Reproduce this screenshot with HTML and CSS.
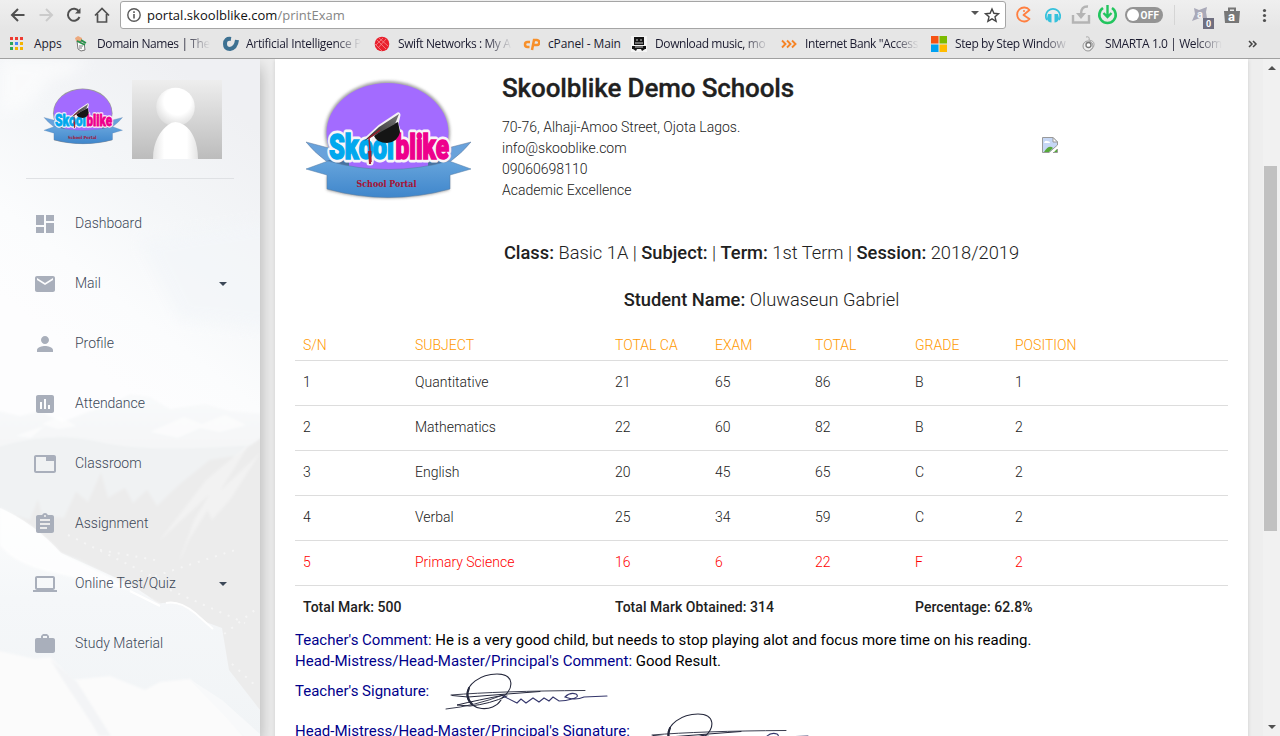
FILE: index.html
```html
<!DOCTYPE html>
<html lang="en">
<head>
<meta charset="utf-8">
<title>Skoolblike - Print Exam</title>
<link rel="stylesheet" href="styles.css">
</head>
<body>
<svg width="0" height="0" class="defs">
  <defs>
    <linearGradient id="ribbon" x1="0" y1="0" x2="0" y2="1"><stop offset="0" stop-color="#66a4dc"/><stop offset="1" stop-color="#3f86cb"/></linearGradient>
    <linearGradient id="cap" x1="0" y1="1" x2="1" y2="0"><stop offset="0" stop-color="#222"/><stop offset="1" stop-color="#777"/></linearGradient>
    <filter id="soft" x="-20%" y="-20%" width="140%" height="140%"><feGaussianBlur stdDeviation="1.6"/></filter>
    <symbol id="logo" viewBox="300 76 176 126">
      <ellipse cx="387.500" cy="133" rx="62.500" ry="52" fill="#444" opacity=".5" filter="url(#soft)"/>
      <path d="M327 176 V190 Q388 206 449 190 V176Z" fill="#333" opacity=".5" filter="url(#soft)"/>
      <ellipse cx="387.500" cy="133" rx="61" ry="50" fill="#a36bff"/>
      <path d="M306 142 L340 151 V167 L326 161 Q314 152 306 142Z M471 142 L436 151 V167 L451 161 Q463 152 471 142Z" fill="#69a2db" stroke="#60789a" stroke-width=".5"/>
      <path d="M327 160 L349 160 V169 Z M449 160 L428 160 V169Z" fill="#49729f"/>
      <path d="M306 169 L328 161 Q388 178 449 161 L471 169 L450 175 V189 Q388 206 327 189 V175Z" fill="url(#ribbon)" stroke="#557ba3" stroke-width=".5"/>
      <g class="logo-word logo-halo">
        <text x="329" y="159" textLength="65" lengthAdjust="spacingAndGlyphs">Skool</text>
        <text x="395.500" y="159" textLength="53.500" lengthAdjust="spacingAndGlyphs">blike</text>
      </g>
      <path d="M366 140 L380 127 L398 115 L396 124 L399 133 L390 142 L374 140 L371 163 L369 163 L369 143Z" fill="#fff" stroke="#f4f1f4" stroke-width="5" stroke-linejoin="round"/>
      <g class="logo-word">
        <text class="logo-cyan" x="329" y="159" textLength="65" lengthAdjust="spacingAndGlyphs">Skool</text>
        <text class="logo-pink" x="395.500" y="159" textLength="53.500" lengthAdjust="spacingAndGlyphs">blike</text>
      </g>
      <path d="M374 136 Q384 128 398 122 L400 132 Q398 142 387 143 Q377 143 374 136Z" fill="#151515"/>
      <path d="M364 141 L379 127 L399 114 L395 124 L377 134Z" fill="url(#cap)"/>
      <path d="M380 130 L369 138 L371 162" fill="none" stroke="#a51d2d" stroke-width="1.500"/>
      <path d="M368 151 H371.500 L371 164 H369Z" fill="#a51d2d"/>
      <text class="logo-sub" x="356.500" y="187" textLength="60" lengthAdjust="spacingAndGlyphs">School Portal</text>
    </symbol>
    <symbol id="sign" viewBox="434 671 184 42">
      <g fill="none" stroke="#25283c" stroke-linecap="round">
        <path d="M502 698 C515 688 514 674 497 674 C480 674 466 685 467 696 C469 711 493 713 501 700" stroke-width="1.100"/>
        <path d="M469 688 Q465 697 472 704" stroke-width="2"/>
        <path d="M451 695 Q500 691 585 690.500" stroke-width=".9"/>
        <path d="M452 695.500 L468 697 L540 691.500" stroke-width="1"/>
        <path d="M446 709 Q475 706 503 695" stroke-width=".9"/>
        <path d="M505 695 Q478 700 457 705 L470 706 Q490 704 507 696" stroke-width="1"/>
        <path d="M503 696 L517 703 L521 699 L526 703 L533 698 L539 702 L544 698 L549 701 L553 697 L559 701 Q566 701 572 699 Q580 697 576 694 Q570 692 565 697 Q575 701 584 697 L607 696" stroke="#34366b" stroke-width="1.100"/>
      </g>
    </symbol>
  </defs>
</svg>

<header class="chrome">
  <div class="toolbar">
    <svg class="nav" width="112" height="30" viewBox="0 0 112 30" fill="none" stroke="#505050" stroke-width="2">
      <path d="M24.500 15 H12 M18 9 L12 15 L18 21"/>
      <path d="M39.500 15 H52 M46 9 L52 15 L46 21" stroke="#cbcbcb"/>
      <path d="M79 11.500 A6 6 0 1 0 79.500 17"/><path d="M80.500 8 V13.500 H75Z" fill="#505050" stroke="none"/>
      <path d="M95 15.500 L102 8.500 L109 15.500 M97.500 14 V22 H106.500 V14" stroke-width="1.700"/>
    </svg>
    <div class="address">
      <svg width="16" height="16" viewBox="0 0 16 16"><circle cx="8" cy="8" r="6.200" fill="none" stroke="#5a5a5a" stroke-width="1.400"/><path d="M7.200 7h1.600v4.500H7.200z M7.200 4.300h1.600v1.600H7.200z" fill="#5a5a5a"/></svg>
      <span class="url">portal.skoolblike.com<span class="path">/printExam</span></span>
      <svg class="address-end" width="32" height="24" viewBox="0 0 32 24"><path d="M1 8 H9 L5 12Z" fill="#555"/><path d="M22 6 L23.900 10.300 L28.500 10.700 L25 13.800 L26.100 18.300 L22 15.900 L17.900 18.300 L19 13.800 L15.500 10.700 L20.100 10.300Z" fill="none" stroke="#444" stroke-width="1.400"/></svg>
    </div>
    <svg class="extensions" width="274" height="30" viewBox="1006 0 274 30">
      <path d="M1029.500 10 A7 7 0 1 0 1029.500 19 L1023.500 15 Z" fill="none" stroke="#ff7f40" stroke-width="1.800" stroke-linejoin="round"/><circle cx="1024" cy="11" r="1" fill="#ff7f40"/>
      <path d="M1047 20 A7.200 7.200 0 1 1 1059 20" fill="none" stroke="#35c1dc" stroke-width="1.800"/><path d="M1048 14 h3.500 v8.500 q-4 0 -4.500 -4z M1054.500 14 h3.500 l1 4.500 q-1 4 -4.500 4z" fill="#35c1dc"/>
      <path d="M1073 15 V22.500 H1089 V15" fill="none" stroke="#b4b4b4" stroke-width="2.400"/><path d="M1088 6.500 Q1081 6 1081 14" fill="none" stroke="#b4b4b4" stroke-width="2.400"/><path d="M1076 13 H1086 L1081 19Z" fill="#b4b4b4"/>
      <path d="M1103 8 A8.200 8.200 0 1 0 1112 8" fill="none" stroke="#22c55e" stroke-width="2.600"/><path d="M1107.500 5 V16 M1103.500 13 L1107.500 17 L1111.500 13" fill="none" stroke="#22c55e" stroke-width="2.400"/>
      <rect x="1125" y="7" width="38" height="16" rx="8" fill="#949494"/><circle cx="1133" cy="15" r="6" fill="#fff"/><text x="1140.500" y="19" class="off" textLength="18.500">OFF</text>
      <path d="M1174.500 5 V25" stroke="#d5d5d5"/>
      <path d="M1194 8 L1199 10 L1207 7 L1206 12 L1207 18 L1200 18 L1192 21 L1195 14Z" fill="#a9a9b8"/><text x="1197" y="18" class="ext-a">a</text>
      <rect x="1203" y="18" width="11" height="11" fill="#6f6f80"/><text x="1206" y="27" class="badge">0</text>
      <path d="M1224 11 H1240 L1239 23 H1225Z" fill="#777"/><path d="M1229 11 V8.500 H1235 V11" stroke="#777" stroke-width="2" fill="none"/><text x="1228" y="21" class="bag-a">a</text>
      <circle cx="1264.500" cy="10.500" r="1.600" fill="#505050"/><circle cx="1264.500" cy="15.500" r="1.600" fill="#505050"/><circle cx="1264.500" cy="20.500" r="1.600" fill="#505050"/>
    </svg>
  </div>
  <nav class="bookmarks">
    <a class="bm bm-apps"><svg width="16" height="16" viewBox="0 0 16 16"><path d="M1 1h3v3H1zM6 1h3v3H6zM11 1h3v3h-3z" fill="#ee3b31"/><path d="M1 6h3v3H1zM1 11h3v3H1z" fill="#2da65a"/><path d="M6 6h3v3H6z" fill="#4285f4"/><path d="M11 6h3v3h-3zM6 11h3v3H6zM11 11h3v3h-3z" fill="#f4b400"/></svg><span>Apps</span></a>
    <a class="bm bm-domain"><svg width="16" height="16" viewBox="0 0 16 16"><path d="M1 2 L4 0 L8 2 L8 5 L2 5Z" fill="#eda97d"/><path d="M3 5 L10 6 L11 14 L7 15 L4 13Z" fill="#fff" stroke="#777"/><path d="M3 5 L11 9 M7 4 L12 7" stroke="#27934a" stroke-width="1.600"/><path d="M5 10h4M5 12h3" stroke="#777"/></svg><span>Domain Names | The</span></a>
    <a class="bm bm-ai"><svg width="18" height="16" viewBox="0 0 18 16"><path d="M10 3 Q4 2 4 8 Q4 13 9 13 Q15 12 16 4" fill="none" stroke="#3d7192" stroke-width="4"/></svg><span>Artificial Intelligence P</span></a>
    <a class="bm bm-swift"><svg width="16" height="16" viewBox="0 0 16 16"><circle cx="8" cy="8" r="7.300" fill="#e9202d"/><path d="M3 4 L12 13 M5 2 L14 10 M1 8 L8 15 M4 12 L12 3 M2 9 L9 2" stroke="#f58a8f" stroke-width=".8"/></svg><span>Swift Networks : My A</span></a>
    <a class="bm bm-cp"><svg width="17" height="16" viewBox="0 0 17 16"><path d="M7 6 H4.500 A2.500 2.500 0 0 0 4.500 11 H6.500 M9 14 L11 4 H14 A2 2 0 0 1 13.500 9 H11" fill="none" stroke="#f7902b" stroke-width="2.500"/></svg><span>cPanel - Main</span></a>
    <a class="bm bm-music"><svg width="16" height="16" viewBox="0 0 16 16"><path d="M0 0h16v16H0z" fill="#f5f5f5"/><path d="M3 1h10v8H3zM1 10h14v3H1zM2 13l3 2 1-2zM14 13l-3 2-1-2z" fill="#151515"/><path d="M5 4h2M9 4h2M4 7h8M4 11h8" stroke="#ccc"/></svg><span>Download music, mo</span></a>
    <a class="bm bm-bank"><svg width="16" height="16" viewBox="0 0 16 16"><path d="M1 4.500l3.500 3.500L1 11.500M6 4.500L9.500 8 6 11.500M11 4.500L14.500 8 11 11.500" fill="none" stroke="#f58427" stroke-width="1.900"/></svg><span>Internet Bank "Access</span></a>
    <a class="bm bm-win"><svg width="16" height="16" viewBox="0 0 16 16"><path d="M0 0h7.500v7.500H0z" fill="#f65314"/><path d="M8.500 0H16v7.500H8.500z" fill="#7cbb00"/><path d="M0 8.500h7.500V16H0z" fill="#00a1f1"/><path d="M8.500 8.500H16V16H8.500z" fill="#ffbb00"/></svg><span>Step by Step Window</span></a>
    <a class="bm bm-smarta"><svg width="16" height="16" viewBox="0 0 16 16"><circle cx="7" cy="10" r="5" fill="#eee" stroke="#999"/><circle cx="7.500" cy="9" r="2.500" fill="#fff" stroke="#777" stroke-width="1.300"/><path d="M5 1 Q9 0 8 4 Q15 5 12.500 11 L8 15" fill="none" stroke="#aaa"/></svg><span>SMARTA 1.0 | Welcom</span></a>
    <svg class="more" width="10" height="10" viewBox="0 0 10 10"><path d="M1 2l3 3-3 3M5 2l3 3-3 3" fill="none" stroke="#444" stroke-width="1.500"/></svg>
  </nav>
</header>

<div class="page">
  <aside class="sidebar">
    <svg class="scenery" width="260" height="677" viewBox="0 59 260 677" preserveAspectRatio="none">
      <defs>
        <linearGradient id="sky" x1=".65" y1="0" x2=".35" y2="1"><stop offset="0" stop-color="#eff0f3"/><stop offset=".2" stop-color="#f4f6f8"/><stop offset=".38" stop-color="#fbfcfd"/><stop offset=".5" stop-color="#fdfdfe"/></linearGradient>
        <linearGradient id="snow" x1="0" y1="0" x2="0" y2="1"><stop offset="0" stop-color="#fbfcfc"/><stop offset=".4" stop-color="#f5f7f9"/><stop offset="1" stop-color="#f1f4f6"/></linearGradient>
        <linearGradient id="haze" x1="0" y1="0" x2="0" y2="1"><stop offset="0" stop-color="#f9fafb"/><stop offset="1" stop-color="#eff1f2"/></linearGradient>
        <filter id="blur"><feGaussianBlur stdDeviation="7"/></filter>
        <filter id="edge"><feGaussianBlur stdDeviation="1"/></filter>
      </defs>
      <path d="M0 59H260V736H0z" fill="url(#sky)"/>
      <path d="M0 59 H90 L70 75 L50 80 L30 105 L0 115Z" fill="#fff" opacity=".55" filter="url(#blur)"/>
      <path d="M140 240 L280 220 V330 L180 320Z" fill="#f3f6f9" opacity=".7" filter="url(#blur)"/>
      <g filter="url(#edge)">
      <path d="M-5 410 L20 416 L40 411 L62 422 L85 413 L108 405 L130 394 L150 397 L170 409 L205 404 L230 411 L265 414 V520 H-5Z" fill="url(#haze)"/>
      <path d="M42 424 L60 416 L76 426 L58 429Z M150 432 L184 417 L202 424 L225 415 L246 425 L220 432 L200 428 L178 438Z M15 436 L44 426 L31 438Z" fill="#fff" opacity=".5"/>
      <path d="M-5 448 Q50 430 100 442 T265 444 V590 H-5Z" fill="#f0f2f3"/>
      <path d="M-5 509 L30 520 L38 500 L42 515 L64 518 L76 492 L88 502 L101 473 L108 498 L125 488 L133 503 L147 490 L157 506 L180 484 L210 460 L236 456 L265 435 V715 L230 690 L160 604 L80 560 L-5 530Z" fill="#ececec"/>
      <path d="M160 540 L206 480 L250 443 L222 488 L190 538 L179 562 L194 520 L209 495Z M205 505 L260 453 L230 500 L212 520Z" fill="#f6f6f6" opacity=".6"/>
      </g>
      <g fill="none" stroke="#f7f7f7" stroke-width="2" stroke-dasharray="2 7" opacity=".8"><path d="M68 535 L160 580 M100 550 L155 560 M170 590 L245 623 M155 576 L235 550 M210 645 L255 610 M232 664 L257 687"/></g>
      <path d="M0 508 Q34 523 61 553 L110 575 Q140 588 158 604 Q180 598 203 621 L222 628 L229 670 L260 710 V736 H0Z" fill="url(#snow)"/>
      <path d="M0 508 Q34 523 61 553 L112 578 L135 591 Q95 583 55 573 Q15 565 0 545Z" fill="#fff" opacity=".8" filter="url(#edge)"/>
      <path d="M130 591 L160 606 M166 603 Q179 600 195 613 L213 629" fill="none" stroke="#fff" stroke-width="2"/>
      <path d="M-5 650 L35 659 L50 657 L72 680 L110 676 L145 690 L160 682 L190 679 L225 714 L247 740 H-5Z" fill="#fbfbfb" filter="url(#edge)"/>
      <path d="M50 659 L63 680 L92 724 L99 736 H111 L77 682Z" fill="#f3f4f6" filter="url(#edge)"/>
      <path d="M188 678 L222 700 L260 734 V736 H244Z" fill="#f8f9fa"/>
    </svg>
    <div class="brand">
      <svg class="brand-logo" width="84" height="60"><use href="#logo"/></svg>
      <svg class="avatar" width="90" height="79" viewBox="0 0 90 79">
        <defs><linearGradient id="avbg" x1="0" y1="0" x2="0" y2="1"><stop offset="0" stop-color="#eeeeee"/><stop offset="1" stop-color="#bcbcbc"/></linearGradient><radialGradient id="head" cx=".55" cy=".35" r=".7"><stop offset=".5" stop-color="#fff"/><stop offset="1" stop-color="#d8d8d8"/></radialGradient><linearGradient id="torso"><stop offset="0" stop-color="#e4e4e4"/><stop offset=".25" stop-color="#fff"/><stop offset=".75" stop-color="#fff"/><stop offset="1" stop-color="#e4e4e4"/></linearGradient></defs>
        <path d="M0 0h90v79H0z" fill="url(#avbg)"/>
        <circle cx="43.500" cy="27" r="19.300" fill="url(#head)"/>
        <path d="M21 79 C21 61 29 50 36 45 Q43 39 52 45 C60 50 66 62 66 79Z" fill="url(#torso)"/>
      </svg>
    </div>
    <ul class="menu">
      <li><svg viewBox="0 0 24 24"><path d="M3 13h8V3H3v10zm0 8h8v-6H3v6zm10 0h8V11h-8v10zm0-18v6h8V3h-8z"/></svg><span>Dashboard</span></li>
      <li><svg viewBox="0 0 24 24"><path d="M20 4H4c-1.100 0-2 .9-2 2v12c0 1.100.9 2 2 2h16c1.100 0 2-.9 2-2V6c0-1.100-.9-2-2-2zm0 4l-8 5-8-5V6l8 5 8-5v2z"/></svg><span>Mail</span><i class="caret"></i></li>
      <li><svg viewBox="0 0 24 24"><path d="M12 12c2.210 0 4-1.790 4-4s-1.790-4-4-4-4 1.790-4 4 1.790 4 4 4zm0 2c-2.670 0-8 1.340-8 4v2h16v-2c0-2.660-5.330-4-8-4z"/></svg><span>Profile</span></li>
      <li><svg viewBox="0 0 24 24"><path d="M19 3H5c-1.100 0-2 .9-2 2v14c0 1.100.9 2 2 2h14c1.100 0 2-.9 2-2V5c0-1.100-.9-2-2-2zM9 17H7v-7h2v7zm4 0h-2V7h2v10zm4 0h-2v-4h2v4z"/></svg><span>Attendance</span></li>
      <li><svg viewBox="0 0 24 24"><path d="M21 3H3c-1.100 0-2 .9-2 2v14c0 1.100.9 2 2 2h18c1.100 0 2-.9 2-2V5c0-1.100-.9-2-2-2zm0 16H3V5h10v4h8v10z"/></svg><span>Classroom</span></li>
      <li><svg viewBox="0 0 24 24"><path d="M19 3h-4.180C14.400 1.840 13.300 1 12 1c-1.300 0-2.400.84-2.820 2H5c-1.100 0-2 .9-2 2v14c0 1.100.9 2 2 2h14c1.100 0 2-.9 2-2V5c0-1.100-.9-2-2-2zm-7 0c.55 0 1 .45 1 1s-.45 1-1 1-1-.45-1-1 .45-1 1-1zm2 14H7v-2h7v2zm3-4H7v-2h10v2zm0-4H7V7h10v2z"/></svg><span>Assignment</span></li>
      <li><svg viewBox="0 0 24 24"><path d="M20 18c1.100 0 1.990-.9 1.990-2L22 6c0-1.100-.9-2-2-2H4c-1.100 0-2 .9-2 2v10c0 1.100.9 2 2 2H0v2h24v-2h-4zM4 6h16v10H4V6z"/></svg><span>Online Test/Quiz</span><i class="caret"></i></li>
      <li><svg viewBox="0 0 24 24"><path d="M20 6h-4V4l-2-2h-4L8 4v2H4c-1.100 0-2 .9-2 2v11c0 1.100.9 2 2 2h16c1.100 0 2-.9 2-2V8c0-1.100-.9-2-2-2zm-6 0h-4V4h4v2z"/></svg><span>Study Material</span></li>
    </ul>
  </aside>

  <main class="main">
    <section class="card">
      <div class="school">
        <svg class="school-logo" width="176" height="126"><use href="#logo"/></svg>
        <div class="school-info">
          <h1>Skoolblike Demo Schools</h1>
          <p>70-76, Alhaji-Amoo Street, Ojota Lagos.<br>info@skooblike.com<br>09060698110<br>Academic Excellence</p>
        </div>
        <svg class="photo" width="16" height="16" viewBox="0 0 16 16"><path d="M.5 .5H11L15.500 5V8L7 15.500H.5Z" fill="#c6d7f5" stroke="#999"/><path d="M2 6 q1-3 3-2 q3 0 3 2z" fill="#fff"/><path d="M2 15 Q7 7 11 11 L7 15Z M12 15 L15 12 V15Z" fill="#57a93a"/><path d="M11 .5V5H15.500Z" fill="#fff" stroke="#999"/><path d="M11 15.500H15.500V12" fill="none" stroke="#999"/></svg>
      </div>
      <h4 class="exam-line"><b>Class:</b> Basic 1A | <b>Subject:</b> | <b>Term:</b> 1st Term | <b>Session:</b> 2018/2019</h4>
      <h4 class="student-line"><b>Student Name:</b> Oluwaseun Gabriel</h4>
      <table class="results">
        <colgroup><col class="c-sn"><col class="c-subject"><col class="c-num"><col class="c-num"><col class="c-num"><col class="c-num"><col></colgroup>
        <thead><tr><th>S/N</th><th>SUBJECT</th><th>TOTAL CA</th><th>EXAM</th><th>TOTAL</th><th>GRADE</th><th>POSITION</th></tr></thead>
        <tbody>
          <tr><td>1</td><td>Quantitative</td><td>21</td><td>65</td><td>86</td><td>B</td><td>1</td></tr>
          <tr><td>2</td><td>Mathematics</td><td>22</td><td>60</td><td>82</td><td>B</td><td>2</td></tr>
          <tr><td>3</td><td>English</td><td>20</td><td>45</td><td>65</td><td>C</td><td>2</td></tr>
          <tr><td>4</td><td>Verbal</td><td>25</td><td>34</td><td>59</td><td>C</td><td>2</td></tr>
          <tr class="fail"><td>5</td><td>Primary Science</td><td>16</td><td>6</td><td>22</td><td>F</td><td>2</td></tr>
          <tr class="totals"><td colspan="2">Total Mark: 500</td><td colspan="3">Total Mark Obtained: 314</td><td colspan="2">Percentage: 62.8%</td></tr>
        </tbody>
      </table>
      <div class="remarks">
        <p><span>Teacher's Comment:</span> He is a very good child, but needs to stop playing alot and focus more time on his reading.</p>
        <p><span>Head-Mistress/Head-Master/Principal's Comment:</span> Good Result.</p>
        <div class="signature"><span>Teacher's Signature:</span><svg width="184" height="42"><use href="#sign"/></svg></div>
        <div class="signature"><span>Head-Mistress/Head-Master/Principal's Signature:</span><svg width="184" height="42"><use href="#sign"/></svg></div>
      </div>
    </section>
  </main>

  <div class="scrollbar"><i class="arrow up"></i><div class="thumb"></div><i class="arrow down"></i></div>
</div>
</body>
</html>
```
FILE: styles.css
```css
* { box-sizing: border-box; }
html, body { height: 100%; }
body { margin: 0; overflow: hidden; display: flex; flex-direction: column; height: 736px; background: #eee; font-family: Roboto, sans-serif; font-size: 14px; font-weight: 300; color: #212121; }
.defs { position: absolute; }
p, h1, h4, ul { margin: 0; padding: 0; }
svg { display: block; flex: none; }

/* Browser frame */
.chrome { position: relative; z-index: 2; flex: none; height: 59px; background: linear-gradient(#efefef, #e6e6e6 50%); border-bottom: 1px solid #a0a0a0; font-family: "Open Sans", sans-serif; font-weight: 400; color: #1c1c30; }
.toolbar { display: flex; height: 30px; }
.nav { margin-right: 8px; }
.address { display: flex; align-items: center; width: 886px; height: 28px; margin-top: 1px; padding: 0 4px 0 5px; background: #fff; border: 1px solid #a5a5a5; border-radius: 3px; }
.url { margin-left: 5px; font-size: 13px; letter-spacing: .03px; color: #111; white-space: nowrap; }
.path { color: #858585; }
.address-end { margin-left: auto; margin-right: -1px; }
.off { font: 700 10px Roboto, sans-serif; fill: #fff; }
.ext-a { font: 700 11px Roboto, sans-serif; fill: #f5f5f5; }
.badge { font: 700 9px Roboto, sans-serif; fill: #fff; }
.bag-a { font: 700 13px Roboto, sans-serif; fill: #fff; }
.bookmarks { display: flex; align-items: center; height: 28px; padding-left: 9px; font-size: 12px; letter-spacing: -.4px; }
.bm { display: flex; align-items: center; flex: none; white-space: nowrap; }
.bm span { flex: 1; padding-bottom: 1px; }
.bm:not(.bm-apps):not(.bm-cp) span { -webkit-mask-image: linear-gradient(to right, #000 calc(100% - 26px), transparent); mask-image: linear-gradient(to right, #000 calc(100% - 26px), transparent); }
.bm-apps { width: 65px; gap: 9px; letter-spacing: -.1px; }
.bm-domain { width: 134px; gap: 7px; }
.bm-ai { width: 140px; margin-left: 13px; gap: 7px; letter-spacing: -.3px; }
.bm-swift { width: 138px; margin-left: 13px; gap: 8px; }
.bm-cp { width: 98px; margin-left: 11px; gap: 8px; letter-spacing: -.15px; }
.bm-music { width: 138px; margin-left: 10px; gap: 8px; }
.bm-bank { width: 138px; margin-left: 12px; gap: 8px; }
.bm-win { width: 138px; margin-left: 12px; gap: 8px; }
.bm-smarta { width: 138px; margin-left: 12px; gap: 8px; }
.more { margin-left: 29px; }

/* Page */
.page { display: flex; flex: 1; min-height: 0; }
.sidebar { position: relative; z-index: 1; width: 260px; flex: none; box-shadow: 0 8px 16px rgba(0,0,0,.28); }
.scenery { position: absolute; inset: 0; z-index: -1; }
.brand { display: flex; height: 120px; margin: 0 26px; padding: 21px 0 0 15px; border-bottom: 1px solid #dfe1e4; }
.brand-logo { margin: 6px 7px 0 0; }
.menu { list-style: none; padding-top: 20px; }
.menu li { display: flex; align-items: center; height: 50px; margin-bottom: 10px; padding: 0 33px; color: #3c4858; }
.menu li span { margin-left: 18px; padding-bottom: 2px; }
.menu li svg { width: 24px; height: 24px; fill: #a9afbb; }
.caret { margin-left: auto; border: 4px solid transparent; border-top-color: #3c4858; border-bottom: 0; }
.main { flex: 1; padding: 0 15px; overflow: hidden; }
.card { position: relative; z-index: 2; width: 973px; height: 690px; padding: 17px 20px 0; background: #fff; box-shadow: 0 1px 4px rgba(0,0,0,.14); }
.school { display: flex; height: 154px; }
.school-logo { margin-left: 5px; }
.school-info { width: 540px; margin-left: 26px; }
.school-info h1 { font-size: 26px; letter-spacing: -.13px; line-height: 24px; font-weight: 500; white-space: nowrap; -webkit-text-stroke: .3px #212121; }
.school-info p { margin-top: 17px; line-height: 21px; }
.photo { margin-top: 61px; }
.exam-line, .student-line { font-size: 18.3px; line-height: 27px; font-weight: 300; text-align: center; }
.exam-line { margin-top: 9px; }
.student-line { margin-top: 20px; }
h4 b { font-weight: 500; }
.results { width: 933px; margin-top: 17px; table-layout: fixed; border-collapse: collapse; }
.c-sn { width: 112px; }
.c-subject { width: 200px; }
.c-num { width: 100px; }
.results th, .results td { padding: 0 8px; text-align: left; font-weight: 300; border-bottom: 1px solid #ddd; }
.results th { height: 30px; color: #ff9800; }
.results td { height: 45px; padding-bottom: 2px; }
.results .fail td { color: #f00; }
.results .totals td { height: 43px; border: 0; font-weight: 500; padding-bottom: 0; letter-spacing: .05px; }
.remarks { margin-top: 2px; font-size: 15px; font-weight: 400; line-height: 21px; color: #000; }
.remarks span { color: #00008b; }
.signature { display: flex; align-items: center; height: 40px; gap: 5px; }
.signature span { padding-bottom: 2px; }

/* School logo lettering */
.logo-word { font: 900 35px Roboto, sans-serif; stroke-width: 1.6px; }
.logo-cyan { fill: #00a8ee; stroke: #00a8ee; }
.logo-pink { fill: #ee008c; stroke: #ee008c; }
.logo-halo { fill: #f8f5f8; stroke: #f8f5f8; stroke-width: 7px; stroke-linejoin: round; }
.logo-sub { font: 700 9px "DejaVu Serif", serif; fill: #a81032; }

/* Scrollbar */
.scrollbar { display: flex; flex-direction: column; align-items: center; width: 17px; padding: 7px 0; background: #f1f1f1; }
.thumb { width: 13px; height: 365px; margin-top: 96px; margin-right: 2px; background: #c1c1c1; }
.arrow { border: 4px solid transparent; }
.up { border-top: 0; border-bottom-color: #505050; }
.down { margin-top: auto; border-bottom: 0; border-top-color: #505050; }
```
